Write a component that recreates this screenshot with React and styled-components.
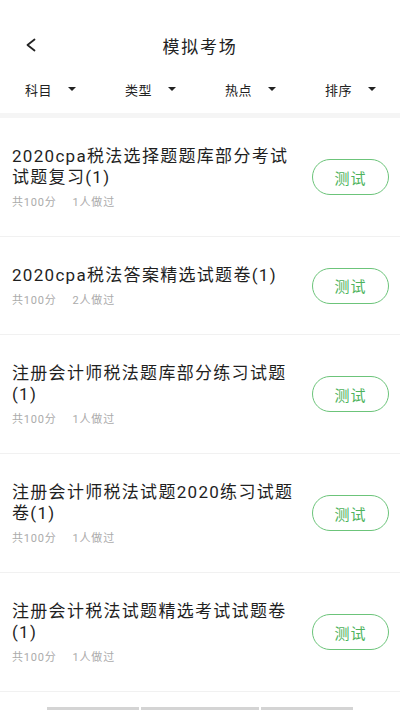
import React from 'react';
import styled, { createGlobalStyle } from 'styled-components';

const GlobalStyle = createGlobalStyle`
  body{
    margin:0;
    background:#fff;
    font-family:Roboto,"Noto Sans CJK SC","Noto Sans",sans-serif;
    color:#222;
  }
`

const Page = styled.div`
  display:flex;
  flex-direction:column;
  width:400px;
`

const NavBar = styled.div`
  display:grid;
  grid-template-columns:60px 1fr 60px;
  align-items:center;
  height:44px;
  padding-top:23px;
`

const BackButton = styled.button`
  display:flex;
  align-items:center;
  padding:0 0 0 25px;
  border:none;
  background:none;
  height:100%;
`

const Title = styled.h1`
  margin:0;
  text-align:center;
  font-size:17px;
  font-weight:400;
  letter-spacing:1.8px;
  color:#222;
`

const FilterBar = styled.div`
  display:grid;
  grid-template-columns:repeat(4,1fr);
  height:46px;
  align-items:center;
`

const Filter = styled.div`
  display:flex;
  align-items:center;
  padding-left:25px;
  padding-bottom:2px;
  font-size:13px;
  letter-spacing:0.5px;
  color:#222;
`

const Caret = styled.span`
  margin-left:16px;
  width:0;
  height:0;
  border-left:4.5px solid transparent;
  border-right:4.5px solid transparent;
  border-top:4.5px solid #222;
`

const Band = styled.div`
  height:5px;
  background:#f5f5f5;
`

const Item = styled.div`
  display:flex;
  align-items:center;
  padding:28px 11px 25px 12px;
  border-bottom:1px solid #f1f1f1;
`

const Info = styled.div`
  flex:1;
  min-width:0;
`

const ItemTitle = styled.div`
  font-size:17px;
  line-height:21px;
  letter-spacing:1.3px;
  color:#1f1f1f;
`

const Meta = styled.div`
  display:flex;
  gap:16px;
  margin-top:7px;
  font-size:11px;
  line-height:16px;
  letter-spacing:0.8px;
  color:#ababab;
`

const TestButton = styled.button`
  flex:0 0 77px;
  height:36px;
  margin:0 0 3px 12px;
  border:1px solid #6cc47a;
  border-radius:18px;
  background:#fff;
  color:#4db35d;
  font-family:inherit;
  font-size:15px;
  letter-spacing:1px;
`

const Footer = styled.div`
  display:flex;
  justify-content:center;
  gap:2px;
  padding-top:15px;
`

const Segment = styled.div`
  width:${p=>p.w}px;
  height:3px;
  background:#d4d4d4;
`

const filters=['科目','类型','热点','排序']

const papers=[
  {id:1,title:'2020cpa税法选择题题库部分考试试题复习(1)',score:100,count:1},
  {id:2,title:'2020cpa税法答案精选试题卷(1)',score:100,count:2},
  {id:3,title:'注册会计师税法题库部分练习试题(1)',score:100,count:1},
  {id:4,title:'注册会计师税法试题2020练习试题卷(1)',score:100,count:1},
  {id:5,title:'注册会计税法试题精选考试试题卷(1)',score:100,count:1},
]

function App(){
  return (
    <Page>
      <GlobalStyle/>
      <NavBar>
        <BackButton>
          <svg width="11" height="14" viewBox="0 0 11 14">
            <polyline points="9.5,1.5 2.5,7 9.5,12.5" fill="none" stroke="#222" strokeWidth="1.8" strokeLinecap="round" strokeLinejoin="round"/>
          </svg>
        </BackButton>
        <Title>模拟考场</Title>
        <div/>
      </NavBar>
      <FilterBar>
        {filters.map(f=>(
          <Filter key={f}>{f}<Caret/></Filter>
        ))}
      </FilterBar>
      <Band/>
      {papers.map(p=>(
        <Item key={p.id}>
          <Info>
            <ItemTitle>{p.title}</ItemTitle>
            <Meta>
              <span>共{p.score}分</span>
              <span>{p.count}人做过</span>
            </Meta>
          </Info>
          <TestButton>测试</TestButton>
        </Item>
      ))}
      <Footer>
        <Segment w={92}/>
        <Segment w={118}/>
        <Segment w={92}/>
      </Footer>
    </Page>
  )
}

export default App
